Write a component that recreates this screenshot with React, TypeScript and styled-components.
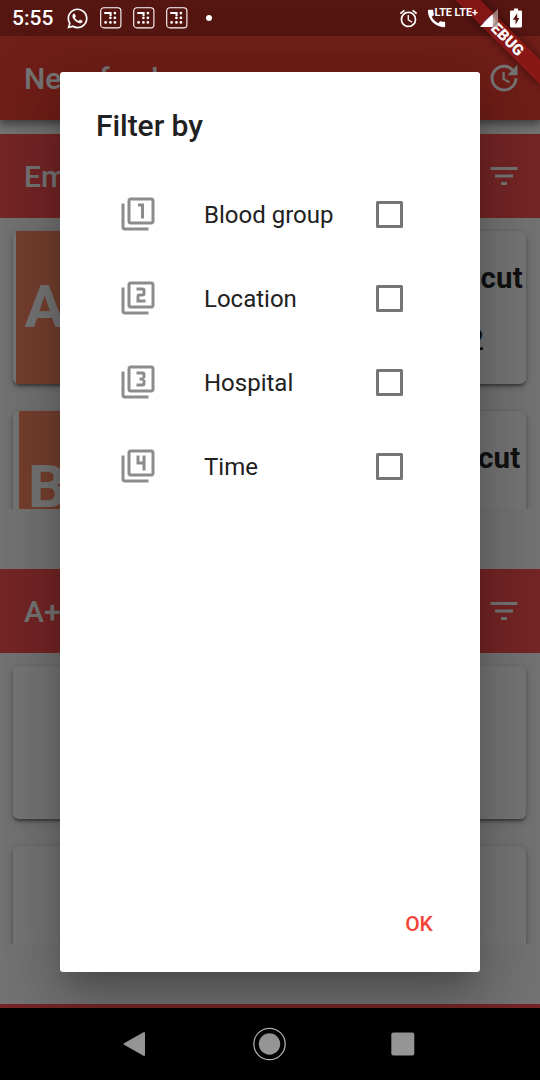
import React from 'react';
import styled, { createGlobalStyle } from 'styled-components';
import {
  MdAccessAlarm,
  MdCall,
  MdFilter1,
  MdFilter2,
  MdFilter3,
  MdFilter4,
  MdFilterList,
} from 'react-icons/md';
import { FaWhatsapp } from 'react-icons/fa';

const GlobalStyle = createGlobalStyle`
  *, *::before, *::after { box-sizing: border-box; }
  body { margin: 0; background: #000; font-family: Roboto, 'Liberation Sans', sans-serif; }
  svg { display: block; flex: none; }
`;

const Screen = styled.div`
  position: relative;
  width: 540px;
  height: 1080px;
  overflow: hidden;
  display: flex;
  flex-direction: column;
`;

const Page = styled.div`
  height: 1008px;
  background: #fafafa;
  display: flex;
  flex-direction: column;
`;

const AppBar = styled.header`
  flex: none;
  height: 120px;
  padding: 36px 18px 0 24px;
  background: linear-gradient(#b92e27 36px, #f44336 36px);
  box-shadow: 0 3px 6px rgba(0, 0, 0, 0.28), 0 6px 8px rgba(0, 0, 0, 0.14), 0 1px 14px rgba(0, 0, 0, 0.12);
  display: flex;
  align-items: center;
  justify-content: space-between;
  color: #fff;
  font-size: 30px;
  font-weight: 500;
  z-index: 1;
`;

const SectionBar = styled.div<{ $gap: number }>`
  flex: none;
  height: 84px;
  margin-top: ${(p) => p.$gap}px;
  padding: 0 18px 0 24px;
  background: #ff5252;
  display: flex;
  align-items: center;
  justify-content: space-between;
  color: #fff;
  font-size: 30px;
  font-weight: 500;
`;

const List = styled.div`
  flex: none;
  height: 291px;
  padding: 13px 14px 0 13px;
  overflow: hidden;
  display: flex;
  flex-direction: column;
  gap: 27px;
`;

const Card = styled.article<{ $inset?: number }>`
  flex: none;
  height: 153px;
  padding-left: ${(p) => p.$inset ?? 0}px;
  border-radius: 6px;
  background: #fff;
  box-shadow: 0 3px 2px -1px rgba(0, 0, 0, 0.26), 0 2px 4px rgba(0, 0, 0, 0.2), 0 3px 8px rgba(0, 0, 0, 0.16);
  display: flex;
`;

const BloodType = styled.div<{ $indent: number }>`
  width: 150px;
  padding-left: ${(p) => p.$indent}px;
  background: #ff8a65;
  color: #fff;
  font-size: 60px;
  line-height: 152px;
  font-weight: 700;
`;

const Details = styled.div<{ $end: number }>`
  flex: 1;
  padding: 29px ${(p) => p.$end}px 0 0;
  display: flex;
  flex-direction: column;
  align-items: flex-end;
  gap: 26px;
  color: rgba(0, 0, 0, 0.87);
  font-size: 29.5px;
  line-height: 36px;
  font-weight: 700;
`;

const Place = styled.span`
  letter-spacing: 0.2px;
`;

const Units = styled.span`
  margin-right: 39px;
  font-weight: 500;
`;

const BottomStrip = styled.div`
  flex: none;
  height: 4px;
  margin-top: 60px;
  background: #ff5252;
`;

const Scrim = styled.div`
  position: absolute;
  inset: 0 0 72px;
  padding: 72px 60px 36px;
  background: rgba(0, 0, 0, 0.54);
  display: flex;
  z-index: 2;
`;

const Dialog = styled.section`
  flex: 1;
  padding: 36px 24px 12px;
  border-radius: 3px;
  background: #fff;
  box-shadow: 0 16px 22px -10px rgba(0, 0, 0, 0.2), 0 36px 57px 4px rgba(0, 0, 0, 0.14),
    0 13px 69px 12px rgba(0, 0, 0, 0.12);
  display: flex;
  flex-direction: column;
`;

const DialogTitle = styled.h1`
  margin: 0 12px 28.5px;
  color: #212121;
  font-size: 30px;
  line-height: 36px;
  font-weight: 500;
  letter-spacing: -0.05px;
`;

const Option = styled.label`
  height: 84px;
  padding: 0 53px 0 36px;
  display: flex;
  align-items: center;
  color: #8c8c8c;
`;

const OptionIcon = styled.span`
  margin: -1px 0.5px 0 -0.5px;
`;

const OptionText = styled.span`
  flex: 1;
  margin-left: 48px;
  color: #212121;
  font-size: 24px;
`;

const Check = styled.span`
  width: 27px;
  height: 27px;
  border: 3px solid #757575;
  border-radius: 1.5px;
`;

const Actions = styled.div`
  margin-top: auto;
  display: flex;
  justify-content: flex-end;
`;

const FlatButton = styled.button`
  width: 96px;
  height: 72px;
  margin-right: -11.5px;
  padding: 0 1px 0 0;
  border: 0;
  background: none;
  color: #f44336;
  font: 500 21px Roboto, sans-serif;
`;

const DebugBanner = styled.div`
  position: absolute;
  top: 42px;
  left: 480px;
  width: 120px;
  height: 18px;
  transform-origin: 60px -42px;
  transform: rotate(45deg);
  background: linear-gradient(rgba(183, 28, 28, 0.63), rgba(183, 28, 28, 0.63)), rgba(0, 0, 0, 0.5);
  box-shadow: 0 0 9px rgba(0, 0, 0, 0.5);
  color: #fff;
  font-size: 15.3px;
  line-height: 18px;
  font-weight: 900;
  text-align: center;
  z-index: 3;
`;

const StatusBar = styled.div`
  position: absolute;
  inset: 0 0 auto;
  height: 36px;
  padding: 0 18px 0 12px;
  display: flex;
  align-items: center;
  color: #fff;
  z-index: 4;
`;

const Clock = styled.span`
  width: 54px;
  font-size: 21px;
  font-weight: 500;
`;

const Notices = styled.div`
  flex: 1;
  display: flex;
  align-items: center;
  gap: 11px;
`;

const Dot = styled.i`
  width: 6px;
  height: 6px;
  margin-left: 7px;
  border-radius: 50%;
  background: #fff;
`;

const Signals = styled.div`
  height: 36px;
  display: flex;
  align-items: center;
`;

const Lte = styled.span`
  align-self: flex-start;
  width: 45.5px;
  margin: 7px 0 0 -13.5px;
  font-size: 10.8px;
  line-height: 12px;
  font-weight: 700;
  white-space: nowrap;
`;

const CallSlot = styled.span`
  margin: 1px 0 0 6px;
`;

const BatterySlot = styled.span`
  margin-left: 12px;
`;

const NavBar = styled.nav`
  height: 72px;
  padding: 0 125px 0 122px;
  background: #000;
  display: flex;
  align-items: center;
  justify-content: space-between;
`;

const UpdateIcon = () => (
  <svg width="36" height="36" viewBox="0 0 24 24" fill="currentColor">
    <path d="M21 10.120h-6.780l2.740-2.820c-2.730-2.700-7.150-2.800-9.880-.100-2.730 2.710-2.730 7.080 0 9.790 2.730 2.710 7.150 2.710 9.880 0C18.320 15.650 19 14.080 19 12.100h2c0 1.980-.880 4.550-2.640 6.290-3.510 3.480-9.210 3.480-12.720 0-3.500-3.470-3.530-9.110-.020-12.580 3.510-3.470 9.140-3.470 12.650 0L21 3v7.120zM12.500 8v4.250l3.500 2.080-.720 1.210L11 13V8h1.500z" />
  </svg>
);

const GridNotice = () => (
  <svg width="22" height="22" viewBox="0 0 22 22" fill="#fff">
    <rect x="0.7" y="0.7" width="20.2" height="20.2" rx="3.2" fill="none" stroke="#fff" strokeWidth="1.100" />
    <path d="M4.200 5h7.400v4H9.500V7H4.200z" />
    {[[14.9, 6.1], [10.4, 10.8], [14.9, 10.8], [5.6, 15.4], [10.4, 15.4], [14.9, 15.4]].map(([x, y]) => (
      <circle key={`${x}-${y}`} cx={x} cy={y} r="1.350" />
    ))}
  </svg>
);

const SignalIcon = () => (
  <svg width="18" height="18" viewBox="0 0 18 18">
    <path d="M18 0v18H0z" fill="#b09a98" opacity="0.8" />
    <path d="M12.800 5.200v12.800H0z" fill="#fff" />
  </svg>
);

const BatteryIcon = () => (
  <svg width="12" height="20" viewBox="0 0 12 20">
    <path
      fillRule="evenodd"
      fill="#fff"
      d="M4 0.500h4v2h2.800c.7 0 1.200.5 1.200 1.200v14.600c0 .7-.5 1.200-1.200 1.200H1.200c-.7 0-1.200-.5-1.200-1.200V3.700C0 3 .5 2.500 1.200 2.500H4zM7.200 5.200L2.800 11.800h2.700v5L9.300 10H7.200z"
    />
  </svg>
);

const options = [
  { label: 'Blood group', Icon: MdFilter1 },
  { label: 'Location', Icon: MdFilter2 },
  { label: 'Hospital', Icon: MdFilter3 },
  { label: 'Time', Icon: MdFilter4 },
];

export default function App() {
  return (
    <Screen>
      <GlobalStyle />
      <Page>
        <AppBar>
          Newsfeed
          <UpdateIcon />
        </AppBar>
        <SectionBar $gap={14}>
          Emergency
          <MdFilterList size={36} />
        </SectionBar>
        <List>
          <Card $inset={3}>
            <BloodType $indent={8.5}>A</BloodType>
            <Details $end={3}>
              <Place>Calicut</Place>
              <Units>2</Units>
            </Details>
          </Card>
          <Card $inset={5.5}>
            <BloodType $indent={9.5}>B</BloodType>
            <Details $end={5.5}>
              <Place>Calicut</Place>
            </Details>
          </Card>
        </List>
        <SectionBar $gap={60}>
          A+
          <MdFilterList size={36} />
        </SectionBar>
        <List>
          <Card />
          <Card />
        </List>
        <BottomStrip />
      </Page>
      <NavBar>
        <svg width="24" height="26" viewBox="0 0 24 26">
          <path d="M2.500 13L22 2v22z" fill="#999" stroke="#999" strokeWidth="2" strokeLinejoin="round" />
        </svg>
        <svg width="34" height="34" viewBox="0 0 34 34">
          <circle cx="17.500" cy="17" r="15.700" fill="none" stroke="#b5b5b5" strokeWidth="1.300" />
          <circle cx="17.500" cy="17" r="10.700" fill="#999" />
        </svg>
        <svg width="24" height="24" viewBox="0 0 24 24">
          <rect x="0.300" y="0.500" width="23" height="23" rx="2" fill="#999" />
        </svg>
      </NavBar>
      <Scrim>
        <Dialog>
          <DialogTitle>Filter by</DialogTitle>
          {options.map(({ label, Icon }) => (
            <Option key={label}>
              <OptionIcon>
                <Icon size={36} />
              </OptionIcon>
              <OptionText>{label}</OptionText>
              <Check />
            </Option>
          ))}
          <Actions>
            <FlatButton>OK</FlatButton>
          </Actions>
        </Dialog>
      </Scrim>
      <DebugBanner>DEBUG</DebugBanner>
      <StatusBar>
        <Clock>5:55</Clock>
        <Notices>
          <FaWhatsapp size={23} />
          <GridNotice />
          <GridNotice />
          <GridNotice />
          <Dot />
        </Notices>
        <Signals>
          <MdAccessAlarm size={21} />
          <CallSlot>
            <MdCall size={23} />
          </CallSlot>
          <Lte>LTE LTE+</Lte>
          <SignalIcon />
          <BatterySlot>
            <BatteryIcon />
          </BatterySlot>
        </Signals>
      </StatusBar>
    </Screen>
  );
}
